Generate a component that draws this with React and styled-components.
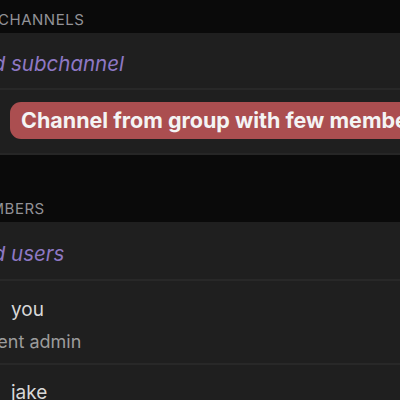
import styled, { createGlobalStyle } from 'styled-components';

const GlobalStyle = createGlobalStyle`
    html, body {
        margin: 0;
        padding: 0;
        background: #0a0a0a;
    }
    body {
        font-family: Inter, "Noto Sans", "Liberation Sans", sans-serif;
        -webkit-font-smoothing: antialiased;
    }
`

const Viewport = styled.div`
    width: 400px;
    height: 400px;
    overflow: hidden;
    background: #0a0a0a;
`

// the screenshot is a crop, so the list runs past the left edge
const Screen = styled.div`
    width: 480px;
    margin-left: -40px;
    display: flex;
    flex-direction: column;
`

const Section = styled.section`
    display: flex;
    flex-direction: column;
`

const SectionHeader = styled.div`
    color: #929297;
    font-size: 15px;
    line-height: 1;
    letter-spacing: 0.5px;
    text-transform: uppercase;
    padding-left: ${p => p.$indent}px;
    padding-bottom: 6px;
    height: ${p => p.$height}px;
    box-sizing: border-box;
    display: flex;
    align-items: flex-end;
`

const Group = styled.div`
    background: #1f1f1f;
    display: flex;
    flex-direction: column;
    border-bottom: 2px solid #262626;
`

const Row = styled.div`
    display: flex;
    flex-direction: column;
    justify-content: ${p => p.$top ? 'flex-start' : 'center'};
    height: ${p => p.$height}px;
    padding-left: ${p => p.$indent}px;
    padding-top: ${p => p.$top || 0}px;
    box-sizing: border-box;
    border-bottom: ${p => p.$last ? 'none' : '2px solid #282828'};
`

const ActionText = styled.div`
    color: #8e78c4;
    font-size: 20.5px;
    line-height: 26px;
    font-style: italic;
`

const Pill = styled.div`
    align-self: flex-start;
    background: #ab4e50;
    color: #f4f4f4;
    font-weight: 700;
    font-size: 21.5px;
    border-radius: 11px;
    height: 37px;
    display: flex;
    align-items: center;
    padding: 0 11px;
    margin-top: -3px;
    white-space: nowrap;
`

const UserName = styled.div`
    color: #d8d8d8;
    font-size: 19px;
    line-height: 24px;
    padding-left: ${p => p.$indent || 0}px;
`

const UserRole = styled.div`
    color: #9c9c9c;
    font-size: 18px;
    line-height: 22px;
    margin-top: 9px;
`

export default function App() {
    return (
        <Viewport>
            <GlobalStyle />
            <Screen>
                <Section>
                    <SectionHeader $height={33} $indent={6}>Subchannels</SectionHeader>
                    <Group>
                        <Row $height={57} $indent={6} $top={18}>
                            <ActionText>Add subchannel</ActionText>
                        </Row>
                        <Row $height={63} $indent={50} $last>
                            <Pill>Channel from group with few members</Pill>
                        </Row>
                    </Group>
                </Section>
                <Section>
                    <SectionHeader $height={67} $indent={7}>Members</SectionHeader>
                    <Group>
                        <Row $height={59} $indent={6} $top={19}>
                            <ActionText>Add users</ActionText>
                        </Row>
                        <Row $height={84} $indent={-1} $top={17}>
                            <UserName $indent={51}>you</UserName>
                            <UserRole>Current admin</UserRole>
                        </Row>
                        <Row $height={60} $indent={-1} $top={16} $last>
                            <UserName $indent={51}>jake</UserName>
                        </Row>
                    </Group>
                </Section>
            </Screen>
        </Viewport>
    )
}
